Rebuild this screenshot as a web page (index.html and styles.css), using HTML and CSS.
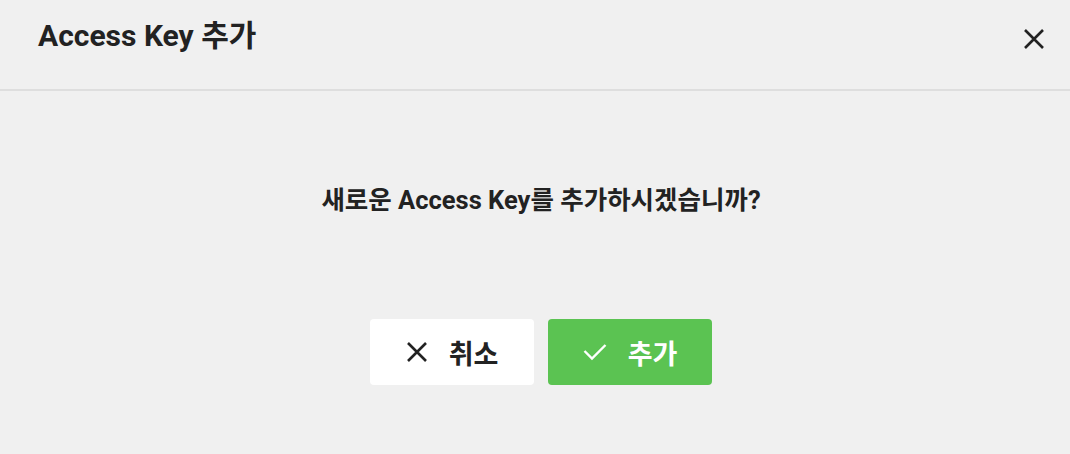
FILE: index.html
```html
<!DOCTYPE html>
<html lang="ko">
<head>
    <meta charset="UTF-8">
    <title>Access Key 추가</title>
    <link rel="stylesheet" href="styles.css">
</head>
<body>
    <div class="dialog">
        <div class="dialog-header">
            <h1 class="dialog-title">Access Key 추가</h1>
            <button class="close-btn" aria-label="닫기">
                <svg width="22" height="22" viewBox="0 0 22 22"><path d="M2 2L20 20M20 2L2 20" stroke="#222" stroke-width="2.6" fill="none"/></svg>
            </button>
        </div>
        <div class="dialog-body">
            <p class="message">새로운 Access Key를 추가하시겠습니까?</p>
            <div class="actions">
                <button class="btn btn-cancel">
                    <svg width="22" height="22" viewBox="0 0 22 22"><path d="M2 2L20 20M20 2L2 20" stroke="#222" stroke-width="2.6" fill="none"/></svg>
                    <span>취소</span>
                </button>
                <button class="btn btn-add">
                    <svg width="24" height="18" viewBox="0 0 24 18"><path d="M1.5 8L9 15.5L22.5 2" stroke="#fff" stroke-width="2.4" fill="none"/></svg>
                    <span>추가</span>
                </button>
            </div>
        </div>
    </div>
</body>
</html>
```

FILE: styles.css
```css
body {
    margin: 0;
    background-color: #f0f0f0;
    font-family: Roboto, "Noto Sans CJK KR", sans-serif;
    color: #222;
}
.dialog {
    width: 1070px;
    height: 454px;
}
.dialog-header {
    height: 91px;
    border-bottom: 2px solid #dedede;
    display: flex;
    align-items: flex-start;
    justify-content: space-between;
    padding: 0 25px 0 38px;
    box-sizing: border-box;
}
.dialog-title {
    margin: 18px 0 0;
    font-size: 30px;
    font-weight: 700;
    line-height: 36px;
}
.close-btn {
    margin-top: 28px;
    background: none;
    border: 0;
    padding: 0;
    cursor: pointer;
    width: 22px;
    height: 22px;
}
.dialog-body {
    display: flex;
    flex-direction: column;
    align-items: center;
    padding-left: 12px;
}
.message {
    margin: 89px 0 0;
    font-size: 25.5px;
    font-weight: 700;
    line-height: 40px;
}
.actions {
    display: flex;
    gap: 14px;
    margin-top: 99px;
}
.btn {
    width: 164px;
    height: 66px;
    border: 0;
    border-radius: 4px;
    display: flex;
    align-items: center;
    justify-content: center;
    gap: 21px;
    font-family: Roboto, "Noto Sans CJK KR", sans-serif;
    font-size: 27px;
    font-weight: 700;
    cursor: pointer;
}
.btn-cancel {
    background-color: #fff;
    color: #222;
}
.btn-add {
    background-color: #5bc352;
    color: #fff;
}
```
